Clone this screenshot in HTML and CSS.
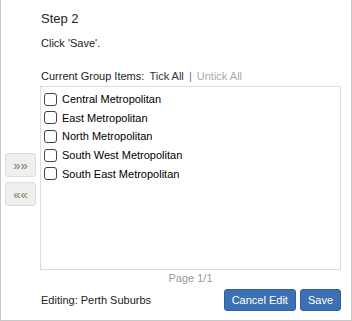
FILE: index.html
```html
<!DOCTYPE html>
<html lang="en">
<head>
    <meta charset="UTF-8">
    <title>Edit Group</title>
    <link rel="stylesheet" href="styles.css">
</head>
<body>
    <div class="panel">
        <div class="head">
            <div class="step">Step 2</div>
            <div class="hint">Click 'Save'.</div>
            <div class="items-bar">
                Current Group Items:
                <a class="tick">Tick All</a>
                <span class="sep">|</span>
                <a class="untick">Untick All</a>
            </div>
        </div>
        <div class="movers">
            <button class="move">&raquo;&raquo;</button>
            <button class="move">&laquo;&laquo;</button>
        </div>
        <div class="list">
            <label class="row"><input type="checkbox"> Central Metropolitan</label>
            <label class="row"><input type="checkbox"> East Metropolitan</label>
            <label class="row"><input type="checkbox"> North Metropolitan</label>
            <label class="row"><input type="checkbox"> South West Metropolitan</label>
            <label class="row"><input type="checkbox"> South East Metropolitan</label>
        </div>
        <div class="pager">Page 1/1</div>
        <div class="foot">
            <span>Editing: Perth Suburbs</span>
            <div class="actions">
                <button class="btn">Cancel Edit</button>
                <button class="btn">Save</button>
            </div>
        </div>
    </div>
</body>
</html>
```

FILE: styles.css
```css
body {
    margin: 0;
    font-family: "Liberation Sans", Arial, sans-serif;
    color: #222;
    background: #fff;
}
.panel {
    width: 352px;
    height: 321px;
    box-sizing: border-box;
    border: 1px solid #c8c8c8;
    border-top: 0;
    display: grid;
    grid-template-columns: 39px 301px;
    grid-template-rows: auto 184px auto auto;
    align-content: start;
}
.head {
    grid-column: 2;
    padding: 11px 0 0 1px;
}
.step {
    font-size: 13px;
    line-height: 15px;
}
.hint {
    margin-top: 11px;
    font-size: 11px;
    line-height: 13px;
}
.items-bar {
    margin-top: 20px;
    font-size: 11px;
    line-height: 13px;
    margin-bottom: 3px;
}
.tick {
    color: #333;
    margin-left: 2px;
}
.sep {
    color: #7b5ea7;
    margin: 0 2px;
}
.untick {
    color: #aaa;
}
.movers {
    grid-column: 1;
    grid-row: 2;
    display: flex;
    flex-direction: column;
    justify-content: center;
    align-items: flex-start;
    gap: 5px;
    padding: 3px 0 0 4px;
}
.move {
    width: 31px;
    height: 24px;
    padding: 0;
    background: #efefef;
    border: 1px solid #dcdcdc;
    border-radius: 3px;
    color: #8a7a55;
    font-family: "Liberation Sans", Arial, sans-serif;
    font-size: 13px;
    line-height: 1;
}
.list {
    grid-column: 2;
    grid-row: 2;
    border: 1px solid #dcdcdc;
    padding-top: 3px;
}
.row {
    display: flex;
    align-items: center;
    height: 18.6px;
    font-size: 11px;
    color: #000;
    padding-left: 3px;
}
.row input {
    appearance: none;
    width: 13px;
    height: 13px;
    margin: 0 5px 0 0;
    border: 1px solid #444;
    border-radius: 3px;
    background: #fff;
}
.pager {
    grid-column: 2;
    text-align: center;
    font-size: 11px;
    line-height: 13px;
    color: #999;
    margin-top: 2px;
}
.foot {
    grid-column: 2;
    margin-top: 4px;
    display: flex;
    justify-content: space-between;
    align-items: center;
    font-size: 11px;
    padding-left: 1px;
}
.actions {
    display: flex;
    gap: 4px;
}
.btn {
    height: 22px;
    padding: 0 7px;
    background: #3d6fb3;
    border: 1px solid #33609e;
    border-radius: 3px;
    color: #fff;
    font-family: "Liberation Sans", Arial, sans-serif;
    font-size: 11px;
}
```
